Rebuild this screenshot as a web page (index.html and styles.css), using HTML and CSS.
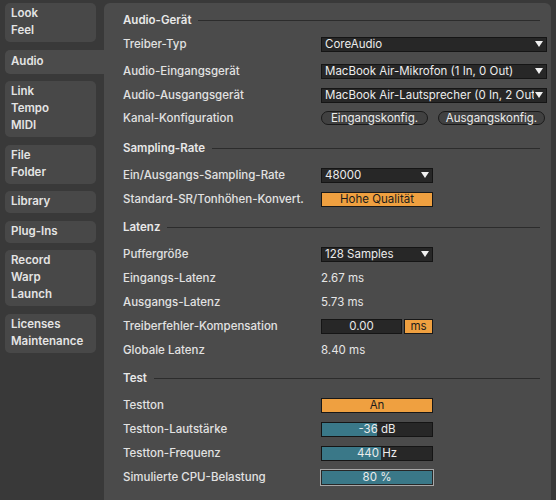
FILE: index.html
```html
<!DOCTYPE html>
<html>
  <head>
    <link rel="stylesheet" href="styles.css">
  </head>

  <body>
    <div class="sidebar">
      <div class="tab">Look<br>Feel</div>
      <div class="tab selected">Audio</div>
      <div class="tab">Link<br>Tempo<br>MIDI</div>
      <div class="tab">File<br>Folder</div>
      <div class="tab">Library</div>
      <div class="tab">Plug-Ins</div>
      <div class="tab">Record<br>Warp<br>Launch</div>
      <div class="tab">Licenses<br>Maintenance</div>
    </div>

    <div class="panel">
      <div class="section">
        <div class="sectionhead"><span>Audio-Gerät</span><div class="rule"></div></div>
        <div class="rows devicerows">
          <div class="label">Treiber-Typ</div>
          <div class="dropdown wide"><span class="ddtext">CoreAudio</span><span class="arrow"></span></div>

          <div class="label">Audio-Eingangsgerät</div>
          <div class="dropdown wide"><span class="ddtext">MacBook Air-Mikrofon (1 In, 0 Out)</span><span class="arrow"></span></div>

          <div class="label">Audio-Ausgangsgerät</div>
          <div class="dropdown wide"><span class="ddtext">MacBook Air-Lautsprecher (0 In, 2 Out)</span><span class="arrow"></span></div>

          <div class="label">Kanal-Konfiguration</div>
          <div class="pills">
            <div class="pill">Eingangskonfig.</div>
            <div class="pill">Ausgangskonfig.</div>
          </div>
        </div>
      </div>

      <div class="section">
        <div class="sectionhead"><span>Sampling-Rate</span><div class="rule"></div></div>
        <div class="rows">
          <div class="label">Ein/Ausgangs-Sampling-Rate</div>
          <div class="dropdown"><span class="ddtext">48000</span><span class="arrow"></span></div>

          <div class="label">Standard-SR/Tonhöhen-Konvert.</div>
          <div class="toggle">Hohe Qualität</div>
        </div>
      </div>

      <div class="section">
        <div class="sectionhead"><span>Latenz</span><div class="rule"></div></div>
        <div class="rows">
          <div class="label">Puffergröße</div>
          <div class="dropdown"><span class="ddtext">128 Samples</span><span class="arrow"></span></div>

          <div class="label">Eingangs-Latenz</div>
          <div class="value">2.67 ms</div>

          <div class="label">Ausgangs-Latenz</div>
          <div class="value">5.73 ms</div>

          <div class="label">Treiberfehler-Kompensation</div>
          <div class="numbergroup">
            <div class="numberbox">0.00</div>
            <div class="unit">ms</div>
          </div>

          <div class="label">Globale Latenz</div>
          <div class="value">8.40 ms</div>
        </div>
      </div>

      <div class="section">
        <div class="sectionhead"><span>Test</span><div class="rule"></div></div>
        <div class="rows">
          <div class="label">Testton</div>
          <div class="toggle">An</div>

          <div class="label">Testton-Lautstärke</div>
          <div class="slider"><div class="fill" style="width: 50%"></div><span class="slidertext">-36 dB</span></div>

          <div class="label">Testton-Frequenz</div>
          <div class="slider"><div class="fill" style="width: 54%"></div><span class="slidertext">440 Hz</span></div>

          <div class="label">Simulierte CPU-Belastung</div>
          <div class="slider focused"><div class="fill" style="width: 100%"></div><span class="slidertext">80 %</span></div>
        </div>
      </div>
    </div>
  </body>
</html>
```

FILE: styles.css
```css
body {
  margin: 0;
  background-color: #393939;
  font-family: Inter, "Noto Sans", sans-serif;
  font-size: 11.5px;
  color: #e2e2e2;
  display: flex;
  height: 500px;
  overflow: hidden;
}

.sidebar {
  width: 104px;
  padding-top: 3px;
  display: flex;
  flex-direction: column;
  gap: 7.5px;
}

.tab {
  margin-left: 5px;
  width: 91px;
  box-sizing: border-box;
  background-color: #484848;
  border-radius: 5px;
  padding: 2px 6px 3px 6px;
  line-height: 17px;
  font-weight: 600;
  color: #e4e4e4;
}

.tab.selected {
  width: 99px;
  padding: 3px 6px 4px 6px;
  border-radius: 5px 0 0 5px;
  background-color: #4b4b4b;
}

.panel {
  width: 447px;
  background-color: #4b4b4b;
  border-radius: 6px 6px 0 0;
  margin-top: 3px;
  padding: 6px 4px 0 19px;
  box-sizing: border-box;
}

.section {
  margin-top: 5px;
}

.section:first-child {
  margin-top: 0;
}

.sectionhead {
  height: 22px;
  display: flex;
  align-items: center;
  gap: 7px;
  font-weight: 600;
  color: #e8e8e8;
  padding-right: 7px;
}

.rule {
  flex: 1;
  height: 1px;
  background-color: #2c2c2c;
}

.rows {
  margin-top: 4px;
  display: grid;
  grid-template-columns: 198px 226px;
  grid-auto-rows: 24px;
  align-items: center;
}

.devicerows {
  margin-top: 1px;
  grid-template-rows: 24px 30px 18px 28px;
}

.label {
  font-weight: 500;
  color: #e2e2e2;
}

.dropdown {
  display: flex;
  align-items: center;
  gap: 1px;
  width: 112px;
  height: 15px;
  box-sizing: border-box;
  background-color: #272727;
  border: 1px solid #151515;
  padding: 0 3px 0 3px;
  line-height: 13px;
  color: #ececec;
}

.dropdown.wide {
  width: 226px;
}

.ddtext {
  flex: 1;
  white-space: nowrap;
  overflow: hidden;
}

.arrow {
  flex: none;
  width: 0;
  height: 0;
  border-left: 4px solid transparent;
  border-right: 4px solid transparent;
  border-top: 6px solid #f0f0f0;
}

.pills {
  display: flex;
  gap: 10px;
}

.pill {
  width: 107px;
  height: 14px;
  box-sizing: border-box;
  border: 1px solid #1a1a1a;
  border-radius: 8px;
  background-color: #414141;
  text-align: center;
  line-height: 12px;
  color: #ececec;
}

.toggle {
  width: 112px;
  height: 15px;
  box-sizing: border-box;
  background-color: #efa040;
  border: 1px solid #181818;
  text-align: center;
  line-height: 13px;
  color: #1c1c1c;
}

.value {
  color: #e6e6e6;
}

.numbergroup {
  display: flex;
  gap: 2px;
}

.numberbox {
  width: 81px;
  height: 15px;
  box-sizing: border-box;
  background-color: #272727;
  border: 1px solid #151515;
  text-align: center;
  line-height: 13px;
  color: #e8e8e8;
}

.unit {
  width: 29px;
  height: 15px;
  box-sizing: border-box;
  background-color: #efa040;
  border: 1px solid #181818;
  text-align: center;
  line-height: 13px;
  color: #1c1c1c;
}

.slider {
  position: relative;
  width: 112px;
  height: 15px;
  box-sizing: border-box;
  background-color: #272727;
  border: 1px solid #151515;
}

.slider.focused {
  width: 114px;
  height: 17px;
  margin-left: -1px;
  border: 1px solid #a8a8a8;
  padding: 1px;
}

.fill {
  height: 100%;
  background-color: #3a7888;
}

.slidertext {
  position: absolute;
  left: 0;
  right: 0;
  top: 0;
  bottom: 0;
  text-align: center;
  line-height: 13px;
  color: #ececec;
}

.slider.focused .slidertext {
  line-height: 15px;
}
```
